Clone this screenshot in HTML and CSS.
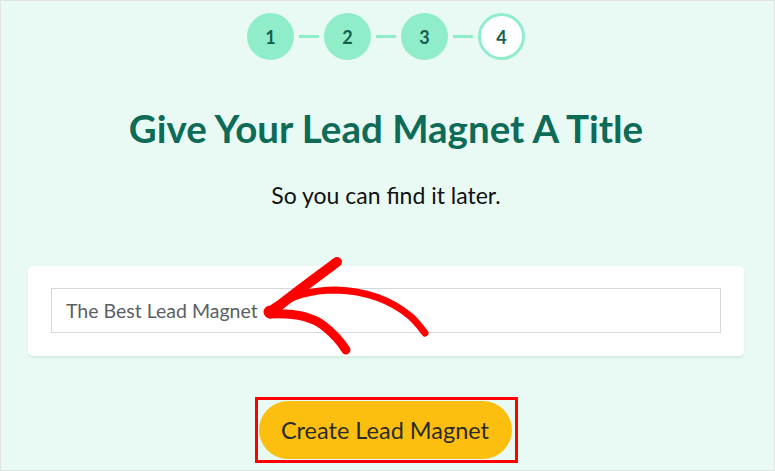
FILE: index.html
```html
<!DOCTYPE html>
<html lang="en">
<head>
<meta charset="utf-8">
<title>Give Your Lead Magnet A Title</title>
<link rel="stylesheet" href="styles.css">
</head>
<body>
<div class="page">
  <div class="steps">
    <div class="step done">1</div>
    <div class="connector"></div>
    <div class="step done">2</div>
    <div class="connector"></div>
    <div class="step done">3</div>
    <div class="connector"></div>
    <div class="step current">4</div>
  </div>
  <h1 class="title">Give Your Lead Magnet A Title</h1>
  <p class="subtitle">So you can find it later.</p>
  <div class="card">
    <input class="field" type="text" value="The Best Lead Magnet">
  </div>
  <div class="highlight">
    <button class="cta" type="button">Create Lead Magnet</button>
  </div>
  <svg class="arrow" width="775" height="471" viewBox="0 0 775 471" aria-hidden="true">
    <g fill="none" stroke="#ff0000" stroke-linecap="round" stroke-linejoin="round">
      <path d="M337 262 C 318 276, 296 292, 271 312" stroke-width="10"/>
      <path d="M270 314 C 290 313, 310 315, 324 326 C 334 334, 341 342, 346 350" stroke-width="9"/>
      <path d="M274 307 C 292 296, 310 290, 336 290 C 366 291, 392 301, 410 316 C 417 322, 421 328, 425 333" stroke-width="7"/>
      <circle cx="270" cy="312" r="3" fill="#ff0000" stroke-width="7"/>
    </g>
  </svg>
</div>
</body>
</html>
```

FILE: styles.css
```css
html, body {
  margin: 0;
  padding: 0;
}

body {
  font-family: Lato, "Open Sans", sans-serif;
}

.page {
  position: relative;
  box-sizing: border-box;
  width: 775px;
  height: 471px;
  border: 1px solid #dfe4e2;
  background: #e8faf3;
  display: flex;
  flex-direction: column;
  align-items: center;
  padding: 12px 3px 0 0;
  overflow: hidden;
}

.steps {
  display: flex;
  align-items: center;
}

.step {
  box-sizing: border-box;
  width: 47px;
  height: 47px;
  border-radius: 50%;
  display: flex;
  align-items: center;
  justify-content: center;
  font-size: 18px;
  font-weight: 700;
  color: #145f50;
}

.step.done {
  background: #90edc9;
}

.step.current {
  background: #ffffff;
  border: 3px solid #90edc9;
}

.connector {
  width: 20px;
  height: 3px;
  margin: 0 5px;
  background: #90edc9;
}

.title {
  margin: 46px 0 0;
  font-size: 38.5px;
  line-height: 44px;
  font-weight: 700;
  color: #0e6b58;
}

.subtitle {
  margin: 32px 0 0;
  font-size: 23px;
  line-height: 26px;
  color: #111111;
}

.card {
  box-sizing: border-box;
  width: 716px;
  margin: 58px 0 0;
  padding: 22px 23px 23px;
  background: #ffffff;
  border-radius: 5px;
  box-shadow: 0 2px 2px rgba(40, 120, 90, 0.10);
}

.field {
  display: block;
  box-sizing: border-box;
  width: 100%;
  height: 45px;
  margin: 0;
  padding: 0 14px;
  border: 1px solid #d5d7db;
  border-radius: 0;
  font-family: Lato, "Open Sans", sans-serif;
  font-size: 19.5px;
  color: #5b5f64;
  background: #ffffff;
  outline: none;
}

.highlight {
  margin-top: 41px;
  border: 3.5px solid #ff0000;
  padding: 1px 3px 1px 1px;
}

.cta {
  display: block;
  width: 253px;
  height: 58px;
  border: none;
  border-radius: 29px;
  background: #fdbf0f;
  font-family: Lato, "Open Sans", sans-serif;
  font-size: 23.5px;
  color: #2b2b2b;
  padding: 0;
}

.arrow {
  position: absolute;
  left: -1px;
  top: -1px;
  pointer-events: none;
}
```
